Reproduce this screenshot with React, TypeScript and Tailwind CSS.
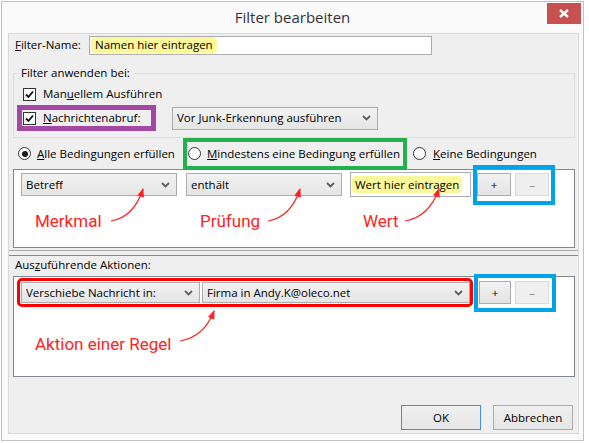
const Chevron = () => (
  <svg width="9" height="6" viewBox="0 0 9 6" className="shrink-0">
    <polyline points="1,1 4.5,4.5 8,1" fill="none" stroke="#606060" strokeWidth="1.8" />
  </svg>
);

const Combo = ({ text, className }: { text: string; className: string }) => (
  <div
    className={
      "flex items-center justify-between border border-[#acacac] bg-linear-to-b from-[#f2f2f2] to-[#e5e5e5] pl-[4px] pr-[6px] " +
      className
    }
  >
    <span className="truncate">{text}</span>
    <Chevron />
  </div>
);

const Check = () => (
  <span className="flex h-[13px] w-[13px] shrink-0 items-center justify-center border border-[#333] bg-white">
    <svg width="9" height="9" viewBox="0 0 9 9">
      <polyline points="1,4.5 3.5,7 8,1.5" fill="none" stroke="#111" strokeWidth="1.8" />
    </svg>
  </span>
);

const Radio = ({ on }: { on?: boolean }) => (
  <span className="flex h-[13px] w-[13px] shrink-0 items-center justify-center rounded-full border border-[#333] bg-white">
    {on && <span className="h-[6px] w-[6px] rounded-full bg-[#1a1a1a]" />}
  </span>
);

const SmallBtn = ({ label, off, w }: { label: string; off?: boolean; w: string }) => (
  <div
    className={
      "flex h-[23px] items-center justify-center border " +
      w +
      (off
        ? " border-[#d9d9d9] bg-[#efefef] text-[#8a8a8a]"
        : " border-[#acacac] bg-linear-to-b from-[#f2f2f2] to-[#e3e3e3] text-black")
    }
  >
    {label}
  </div>
);

export default function App() {
  return (
    <div className="relative h-[443px] w-[589px] overflow-hidden bg-white font-['Open_Sans',sans-serif] text-[11.5px] text-black">
      <div className="ml-px mt-px flex h-[440px] w-[583px] flex-col border border-[#c2c2c2] bg-[#fafafa]">
        {/* title bar */}
        <div className="relative flex h-[31px] shrink-0 items-center justify-center text-[15px] text-[#333]">
          Filter bearbeiten
          <div className="absolute right-[2px] top-px flex h-[21px] w-[34px] items-center justify-center bg-[#c75050]">
            <svg width="10" height="9" viewBox="0 0 10 9">
              <path d="M1 1 L9 8 M9 1 L1 8" stroke="#fff" strokeWidth="2.4" />
            </svg>
          </div>
        </div>

        {/* client */}
        <div className="ml-[6px] flex h-[401px] w-[571px] flex-col border border-[#d9d9d9] bg-[#efefef]">
          <div className="mt-[2px] flex h-[18px] items-center pl-[6px]">
            <span className="w-[74px]">
              <span className="underline">F</span>ilter-Name:
            </span>
            <div className="flex h-[19px] w-[343px] items-center border border-[#abadb3] bg-white pl-px">
              <span className="rounded-[4px] bg-[#fbf99c] px-[4px] leading-[16px]">Namen hier eintragen</span>
            </div>
          </div>

          <fieldset className="ml-[4px] mt-[11px] w-[562px] border border-[#dcdcdc] pb-[6px] pl-[3px]">
            <legend className="ml-px px-[3px] leading-[16px]">Filter anwenden bei:</legend>
            <div className="ml-[6px] mt-[5px] flex h-[16px] items-center gap-[7px]">
              <Check />
              <span>
                Man<span className="underline">u</span>ellem Ausführen
              </span>
            </div>
            <div className="mt-[3px] flex items-center">
              <div className="flex h-[26px] w-[139px] items-center gap-[7px] border-[5px] border-[#a349a4] pl-px">
                <Check />
                <span>
                  <span className="underline">N</span>achrichtenabruf:
                </span>
              </div>
              <Combo text="Vor Junk-Erkennung ausführen" className="ml-[16px] h-[23px] w-[206px]" />
            </div>
          </fieldset>

          <div className="flex h-[31px] items-center pl-[9px]">
            <div className="flex w-[165px] items-center gap-[6px]">
              <Radio on />
              <span>
                <span className="underline">A</span>lle Bedingungen erfüllen
              </span>
            </div>
            <div className="relative z-10 flex h-[32px] w-[224px] items-center gap-[6px] border-4 border-[#22b14c] pl-px">
              <Radio />
              <span className="whitespace-nowrap">
                <span className="underline">M</span>indestens eine Bedingung erfüllen
              </span>
            </div>
            <div className="ml-[6px] flex items-center gap-[7px]">
              <Radio />
              <span>
                <span className="underline">K</span>eine Bedingungen
              </span>
            </div>
          </div>

          <div className="ml-[4px] flex h-[79px] w-[562px] flex-col border border-[#828790] bg-white">
            <div className="mt-[2px] flex h-[25px] items-center pl-[7px]">
              <Combo text="Betreff" className="h-[23px] w-[156px]" />
              <Combo text="enthält" className="ml-[9px] h-[23px] w-[156px]" />
              <div className="ml-[8px] flex h-[25px] w-[121px] items-center border border-[#abadb3] bg-white pl-px">
                <span className="whitespace-nowrap rounded-[4px] bg-[#fbf99c] px-[3px] leading-[17px]">Wert hier eintragen</span>
              </div>
              <div className="ml-[2px] flex h-[40px] w-[82px] shrink-0 items-center gap-[4px] border-4 border-[#00a2e8]">
                <SmallBtn label="+" w="w-[34px]" />
                <SmallBtn label="–" w="w-[34px]" off />
              </div>
            </div>
            <div className="mt-[14px] flex h-[22px] items-center pl-[21px] font-['Roboto',sans-serif] text-[17px] text-[#ff2222]">
              <span className="w-[165px]">Merkmal</span>
              <span className="w-[163px]">Prüfung</span>
              <span>Wert</span>
            </div>
          </div>

          <div className="mt-[2px] h-[6px] border-y border-t-[#a8a8a8] border-b-[#8a8a8a]" />

          <div className="mt-px pl-[6px] leading-[16px]">
            Aus<span className="underline">z</span>uführende Aktionen:
          </div>

          <div className="ml-[4px] mt-[3px] flex h-[101px] w-[562px] flex-col border border-[#828790] bg-white">
            <div className="mt-px flex h-[29px] items-center pl-[3px]">
              <div className="flex h-[29px] w-[456px] items-center gap-[2px] rounded-[5px] border-[3px] border-[#ff0000] pl-px">
                <Combo text="Verschiebe Nachricht in:" className="h-[21px] w-[179px]" />
                <Combo text="Firma in Andy.K@oleco.net" className="h-[21px] w-[268px]" />
              </div>
              <div className="ml-px flex h-[38px] w-[82px] shrink-0 items-center gap-[4px] border-4 border-[#00a2e8] pl-px">
                <SmallBtn label="+" w="w-[32px]" />
                <SmallBtn label="–" w="w-[34px]" off />
              </div>
            </div>
            <div className="mt-[27px] h-[20px] pl-[21px] font-['Roboto',sans-serif] text-[17px] leading-[20px] text-[#ff2222]">
              Aktion einer Regel
            </div>
          </div>

          <div className="mt-[28px] flex justify-end gap-[12px] pr-[5px]">
            <div className="flex h-[25px] w-[80px] items-center justify-center border border-[#3c8ee6] bg-linear-to-b from-[#f0f0f0] to-[#e5e5e5]">
              OK
            </div>
            <div className="flex h-[25px] w-[80px] items-center justify-center border border-[#acacac] bg-linear-to-b from-[#f0f0f0] to-[#e5e5e5]">
              Abbrechen
            </div>
          </div>
        </div>
      </div>

      {/* annotation arrows */}
      <svg className="pointer-events-none absolute inset-0" width="589" height="443">
        <defs>
          <marker id="ah" markerWidth="9" markerHeight="7" refX="8" refY="3.5" orient="auto" markerUnits="userSpaceOnUse">
            <path d="M0,0 L9,3.5 L0,7 z" fill="#ff2222" />
          </marker>
        </defs>
        <g fill="none" stroke="#ff2222" strokeWidth="1.2">
          <path d="M111 221 Q134 217 143 189" markerEnd="url(#ah)" />
          <path d="M268 221 Q291 217 300 189" markerEnd="url(#ah)" />
          <path d="M405 221 Q429 217 439 189" markerEnd="url(#ah)" />
          <path d="M180 341 Q204 337 214 311" markerEnd="url(#ah)" />
        </g>
      </svg>
    </div>
  );
}
